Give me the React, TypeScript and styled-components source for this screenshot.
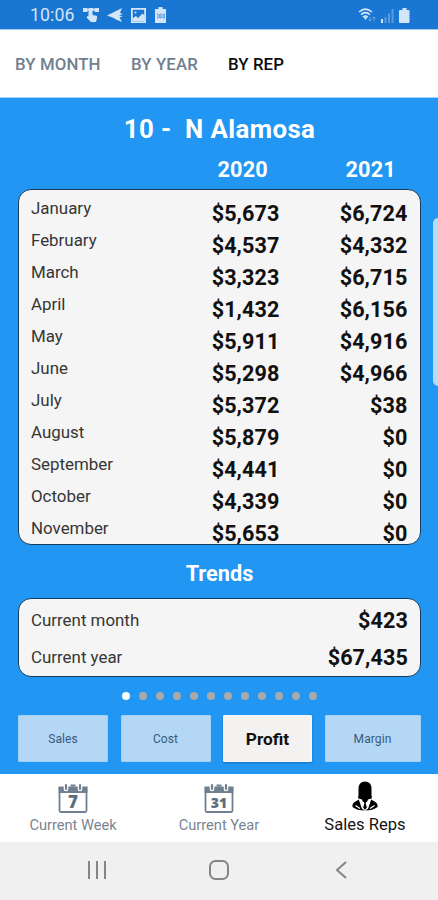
import React from "react";
import styled, { createGlobalStyle } from "styled-components";

const Global = createGlobalStyle`
  * { box-sizing: border-box; }
  body { margin: 0; font-family: Roboto, "Liberation Sans", sans-serif; }
`;

const Screen = styled.div`
  width: 438px;
  height: 900px;
  display: flex;
  flex-direction: column;
  background: #2196f3;
  overflow: hidden;
  position: relative;
`;

const StatusBar = styled.header`
  height: 30px;
  flex: none;
  display: flex;
  align-items: center;
  padding: 1px 27px 0 30px;
  background: #1976d2;
  border-bottom: 1px solid #a9c9ec;
  color: #d3e5f8;
`;

const Clock = styled.span`
  width: 53px;
  font-size: 17.7px;
  line-height: 28px;
  letter-spacing: 0.1px;
`;

const StatusIcons = styled.div<{ $end?: boolean }>`
  display: flex;
  align-items: center;
  gap: ${(p) => (p.$end ? 5 : 7)}px;
  margin-left: ${(p) => (p.$end ? "auto" : "0")};
  svg { display: block; }
`;

const TopTabs = styled.nav`
  height: 68px;
  flex: none;
  display: flex;
  align-items: center;
  gap: 29px;
  padding: 1px 15px 0;
  background: #fff;
  border-bottom: 1px solid #a6d3f8;
`;

const TopTab = styled.span<{ $active?: boolean; $width: number }>`
  width: ${(p) => p.$width}px;
  white-space: nowrap;
  font-size: 16.8px;
  letter-spacing: 0.12px;
  font-weight: 500;
  color: ${(p) => (p.$active ? "#0b0b0b" : "#708090")};
`;

const Main = styled.main`
  height: 676px;
  flex: none;
  display: flex;
  flex-direction: column;
  padding: 0 17px 0 18px;
`;

const Title = styled.h1`
  margin: 15px 0 0;
  height: 32px;
  line-height: 32px;
  text-align: center;
  white-space: pre;
  font-size: 25.8px;
  font-weight: 700;
  letter-spacing: 0.4px;
  color: #fff;
`;

const YearRow = styled.div`
  height: 44px;
  display: grid;
  grid-template-columns: 250px 128px;
  padding-top: 12px;
  line-height: 26px;
  font-size: 21.7px;
  font-weight: 700;
  letter-spacing: 0.2px;
  text-align: right;
  color: #fff;
`;

const Card = styled.section<{ $height: number; $top?: number }>`
  height: ${(p) => p.$height}px;
  flex: none;
  overflow: hidden;
  padding: ${(p) => p.$top ?? 0}px 12px 0 12px;
  background: #f5f5f5;
  border: 1px solid #153d60;
  border-radius: 13px;
`;

const MonthRow = styled.div`
  height: 32px;
  display: grid;
  grid-template-columns: 120px 128.5px 128px;
`;

const TrendRow = styled.div`
  height: 37px;
  display: flex;
  justify-content: space-between;
`;

const Label = styled.span<{ $down?: number }>`
  padding-top: ${(p) => p.$down ?? 0}px;
  line-height: 24px;
  font-size: 16.9px;
  color: #363636;
`;

const Amount = styled.span<{ $down: number }>`
  padding-top: ${(p) => p.$down}px;
  line-height: 28px;
  text-align: right;
  font-size: 21.6px;
  letter-spacing: 0.1px;
  font-weight: 700;
  color: #111;
`;

const TrendTitle = styled.h2`
  margin: 0;
  height: 53px;
  line-height: 58px;
  text-align: center;
  font-size: 21.7px;
  font-weight: 700;
  color: #fff;
`;

const Dots = styled.div`
  height: 38px;
  display: flex;
  justify-content: center;
  align-items: center;
  gap: 9px;
`;

const Dot = styled.i<{ $active?: boolean }>`
  width: 8px;
  height: 8px;
  border-radius: 50%;
  background: ${(p) => (p.$active ? "#fff" : "#a9a9a9")};
`;

const Metrics = styled.div`
  display: grid;
  grid-template-columns: 90px 90px 89px 96px;
  column-gap: 12.5px;
`;

const Metric = styled.button<{ $active?: boolean }>`
  height: 47px;
  padding: 1px 0 0;
  border: 1px solid ${(p) => (p.$active ? "#f8f7f6" : "#a3cff3")};
  border-radius: 1px;
  background: ${(p) => (p.$active ? "#f3f2f1" : "#b3d7f4")};
  box-shadow: ${(p) => (p.$active ? "0 1px 2px #1873bd" : "none")};
  font-family: inherit;
  font-size: ${(p) => (p.$active ? 17.3 : 12)}px;
  font-weight: ${(p) => (p.$active ? 700 : 400)};
  letter-spacing: ${(p) => (p.$active ? 0 : 0.1)}px;
  color: ${(p) => (p.$active ? "#111" : "#375a7a")};
`;

const BottomTabs = styled.nav`
  height: 68px;
  flex: none;
  display: grid;
  grid-template-columns: repeat(3, 146px);
  background: #fff;
`;

const BottomTab = styled.div<{ $active?: boolean }>`
  display: flex;
  flex-direction: column;
  align-items: center;
  padding-top: ${(p) => (p.$active ? 7 : 9)}px;
  font-size: ${(p) => (p.$active ? 16.6 : 14.6)}px;
  line-height: 20px;
  color: ${(p) => (p.$active ? "#151515" : "#788591")};
  svg { display: block; margin-bottom: ${(p) => (p.$active ? 2 : 0)}px; }
`;

const SystemBar = styled.footer`
  flex: 1;
  display: grid;
  grid-template-columns: 194px 50px 194px;
  align-items: center;
  justify-items: center;
  padding-bottom: 2px;
  background: #f0f0f0;
  svg { display: block; }
`;

const EdgeHandle = styled.div`
  position: absolute;
  right: 0;
  top: 218px;
  width: 5px;
  height: 168px;
  border-radius: 5px 0 0 5px;
  background: #b5dbfa;
`;

const months: [string, string, string][] = [
  ["January", "$5,673", "$6,724"],
  ["February", "$4,537", "$4,332"],
  ["March", "$3,323", "$6,715"],
  ["April", "$1,432", "$6,156"],
  ["May", "$5,911", "$4,916"],
  ["June", "$5,298", "$4,966"],
  ["July", "$5,372", "$38"],
  ["August", "$5,879", "$0"],
  ["September", "$4,441", "$0"],
  ["October", "$4,339", "$0"],
  ["November", "$5,653", "$0"],
];

const trends = [
  ["Current month", "$423"],
  ["Current year", "$67,435"],
];

const TouchIcon = () => (
  <svg width="17" height="16" viewBox="0 0 17 16" fill="currentColor">
    <path d="M0 1h4.500v4H0zM5.500 1h5v3h-5zM11.500 1H16v4h-4.500z" />
    <path d="M4 2h8v1.500H4z" />
    <path d="M5.500 4h4v4l4 .7q1 .5.500 2.300l-1 4H8L3.500 10.500l1-1.500 1 .5z" />
  </svg>
);

const SendIcon = () => (
  <svg width="17" height="15" viewBox="0 0 17 15" fill="currentColor">
    <path d="M0 7.6 15 0l-2 5 3 1-4 1.200 4 1.300-3.500.8L15 14l-5.500-2.300L6 9.800z" />
  </svg>
);

const ImageIcon = () => (
  <svg width="15" height="15" viewBox="0 0 15 15" fill="none" stroke="currentColor" strokeWidth="1.8">
    <path d="M.9.9h13.2v13.2H.9z" />
    <path d="m2 10 3-2 2 2 4.5-4.5 2 2V13H2z" fill="currentColor" stroke="none" />
    <circle cx="4.5" cy="4.5" r="1" fill="currentColor" stroke="none" />
  </svg>
);

const BatteryNoticeIcon = () => (
  <svg width="13" height="16" viewBox="-2 0 13 16" fill="currentColor">
    <path d="M3.5 0h4v2H11v14H0V2h3.5z" />
    <path d="M2 7h1v4H2m2.700-4h1.400v4H4.700zm3.300 0h1.400v4H8z" fill="none" stroke="#4589ce" strokeWidth=".8" />
  </svg>
);

const WifiIcon = () => (
  <svg width="18" height="15" viewBox="0 0 18 15" fill="none" stroke="currentColor" strokeWidth="1.6">
    <path d="M1 4q6.500-5.600 13 0M3 6.700q4.500-4 9 0M5 9q2.500-2 5 0" />
    <path d="m5.500 9 2 3 2-3z" fill="currentColor" stroke="none" />
    <path d="M12 9v4m-1.500-1.500L12 13l1.500-1.500M16 13V9m-1.500 1.500L16 9l1.500 1.500" strokeWidth=".7" opacity=".6" />
  </svg>
);

const SignalIcon = () => (
  <svg width="13" height="15" viewBox="0 0 13 15" fill="currentColor">
    <path d="M0 11h2v4H0z" />
    <path d="M3.500 9h2v6h-2zM7 5.500h2V15H7zM10.500 1h2v14h-2z" opacity=".35" />
  </svg>
);

const BatteryIcon = () => (
  <svg width="12" height="15" viewBox="0 0 12 15" fill="currentColor">
    <path d="M3.500 0h4v2H9.500q1 0 1 1v11q0 1-1 1H1q-1 0-1-1V3q0-1 1-1h2.500z" />
  </svg>
);

const CalendarIcon = ({ day }: { day: string }) => (
  <svg width="30" height="32" viewBox="0 0 30 32">
    <path d="M1.500 5v22.500Q1.500 29 3 29h24q1.500 0 1.500-1.500V5z" fill="#fff" stroke="#708090" strokeWidth="1.800" />
    <path d="M.6 3.500h28.800v6.500H.6z" fill="#708090" />
    <path d="M8 1.500v4.500M22 1.500v4.500" stroke="#fff" strokeWidth="4.600" strokeLinecap="round" />
    <path d="M8 2v4M22 2v4" stroke="#708090" strokeWidth="2.200" strokeLinecap="round" />
    <path d="M12.500 2.500h5" stroke="#708090" strokeWidth="2" />
    <text x="15" y="25" textAnchor="middle" fontFamily="Open Sans, sans-serif" fontWeight="800" fontSize={day.length > 1 ? 14 : 17} fill="#5c6d7e">
      {day}
    </text>
  </svg>
);

const RepIcon = () => (
  <svg width="28" height="32" viewBox="0 0 28 32">
    <path d="M7.500 14.500V8Q7.500.5 14 .5T20.500 8v6.500q1 1.500 0 3l-3.500 1-1 2.500h-4l-1-2.500-3.500-1q-1-1.500 0-3z" />
    <path d="m8 18.500-4 2.300Q1 22.500 1.500 26 6 29.500 14 29.500T26.500 26q.5-3.500-2.500-5.200l-4-2.300-2.500 5.500L14 28l-3.500-4z" />
    <path d="m8.700 18.500 2.800 8.500L14 29l2.500-2 2.800-8.500" fill="none" stroke="#fff" strokeWidth="1.600" />
    <path d="M4.500 24.500 9 27.500M23.500 24.500 19 27.500" stroke="#fff" strokeWidth="1.200" />
    <path d="M12.500 20h3l-.8 2 1 4.500L14 29l-1.700-2.500 1-4.500z" />
  </svg>
);

export default function App() {
  return (
    <>
      <Global />
      <Screen>
        <StatusBar>
          <Clock>10:06</Clock>
          <StatusIcons>
            <TouchIcon />
            <SendIcon />
            <ImageIcon />
            <BatteryNoticeIcon />
          </StatusIcons>
          <StatusIcons $end>
            <WifiIcon />
            <SignalIcon />
            <BatteryIcon />
          </StatusIcons>
        </StatusBar>
        <TopTabs>
          <TopTab $width={87}>BY MONTH</TopTab>
          <TopTab $width={68}>BY YEAR</TopTab>
          <TopTab $width={60} $active>BY REP</TopTab>
        </TopTabs>
        <Main>
          <Title>{"10 -  N Alamosa"}</Title>
          <YearRow>
            <span>2020</span>
            <span>2021</span>
          </YearRow>
          <Card $height={356} $top={6}>
            {months.map(([month, previous, current]) => (
              <MonthRow key={month}>
                <Label>{month}</Label>
                <Amount $down={4}>{previous}</Amount>
                <Amount $down={4}>{current}</Amount>
              </MonthRow>
            ))}
          </Card>
          <TrendTitle>Trends</TrendTitle>
          <Card $height={79} $top={5}>
            {trends.map(([name, value]) => (
              <TrendRow key={name}>
                <Label $down={4}>{name}</Label>
                <Amount $down={3}>{value}</Amount>
              </TrendRow>
            ))}
          </Card>
          <Dots>
            {Array.from({ length: 12 }, (_, i) => (
              <Dot key={i} $active={i === 0} />
            ))}
          </Dots>
          <Metrics>
            <Metric>Sales</Metric>
            <Metric>Cost</Metric>
            <Metric $active>Profit</Metric>
            <Metric>Margin</Metric>
          </Metrics>
        </Main>
        <BottomTabs>
          <BottomTab><CalendarIcon day="7" />Current Week</BottomTab>
          <BottomTab><CalendarIcon day="31" />Current Year</BottomTab>
          <BottomTab $active><RepIcon />Sales Reps</BottomTab>
        </BottomTabs>
        <SystemBar>
          <svg width="18" height="18" viewBox="0 0 18 18" stroke="#858585" strokeWidth="2">
            <path d="M1 0v18M9 0v18M17 0v18" />
          </svg>
          <svg width="20" height="20" viewBox="0 0 20 20" fill="none" stroke="#858585" strokeWidth="2">
            <rect x="1" y="1" width="18" height="18" rx="5.500" />
          </svg>
          <svg width="12" height="18" viewBox="0 0 12 18" fill="none" stroke="#858585" strokeWidth="2">
            <path d="M11 1 2 9l9 8" />
          </svg>
        </SystemBar>
        <EdgeHandle />
      </Screen>
    </>
  );
}
